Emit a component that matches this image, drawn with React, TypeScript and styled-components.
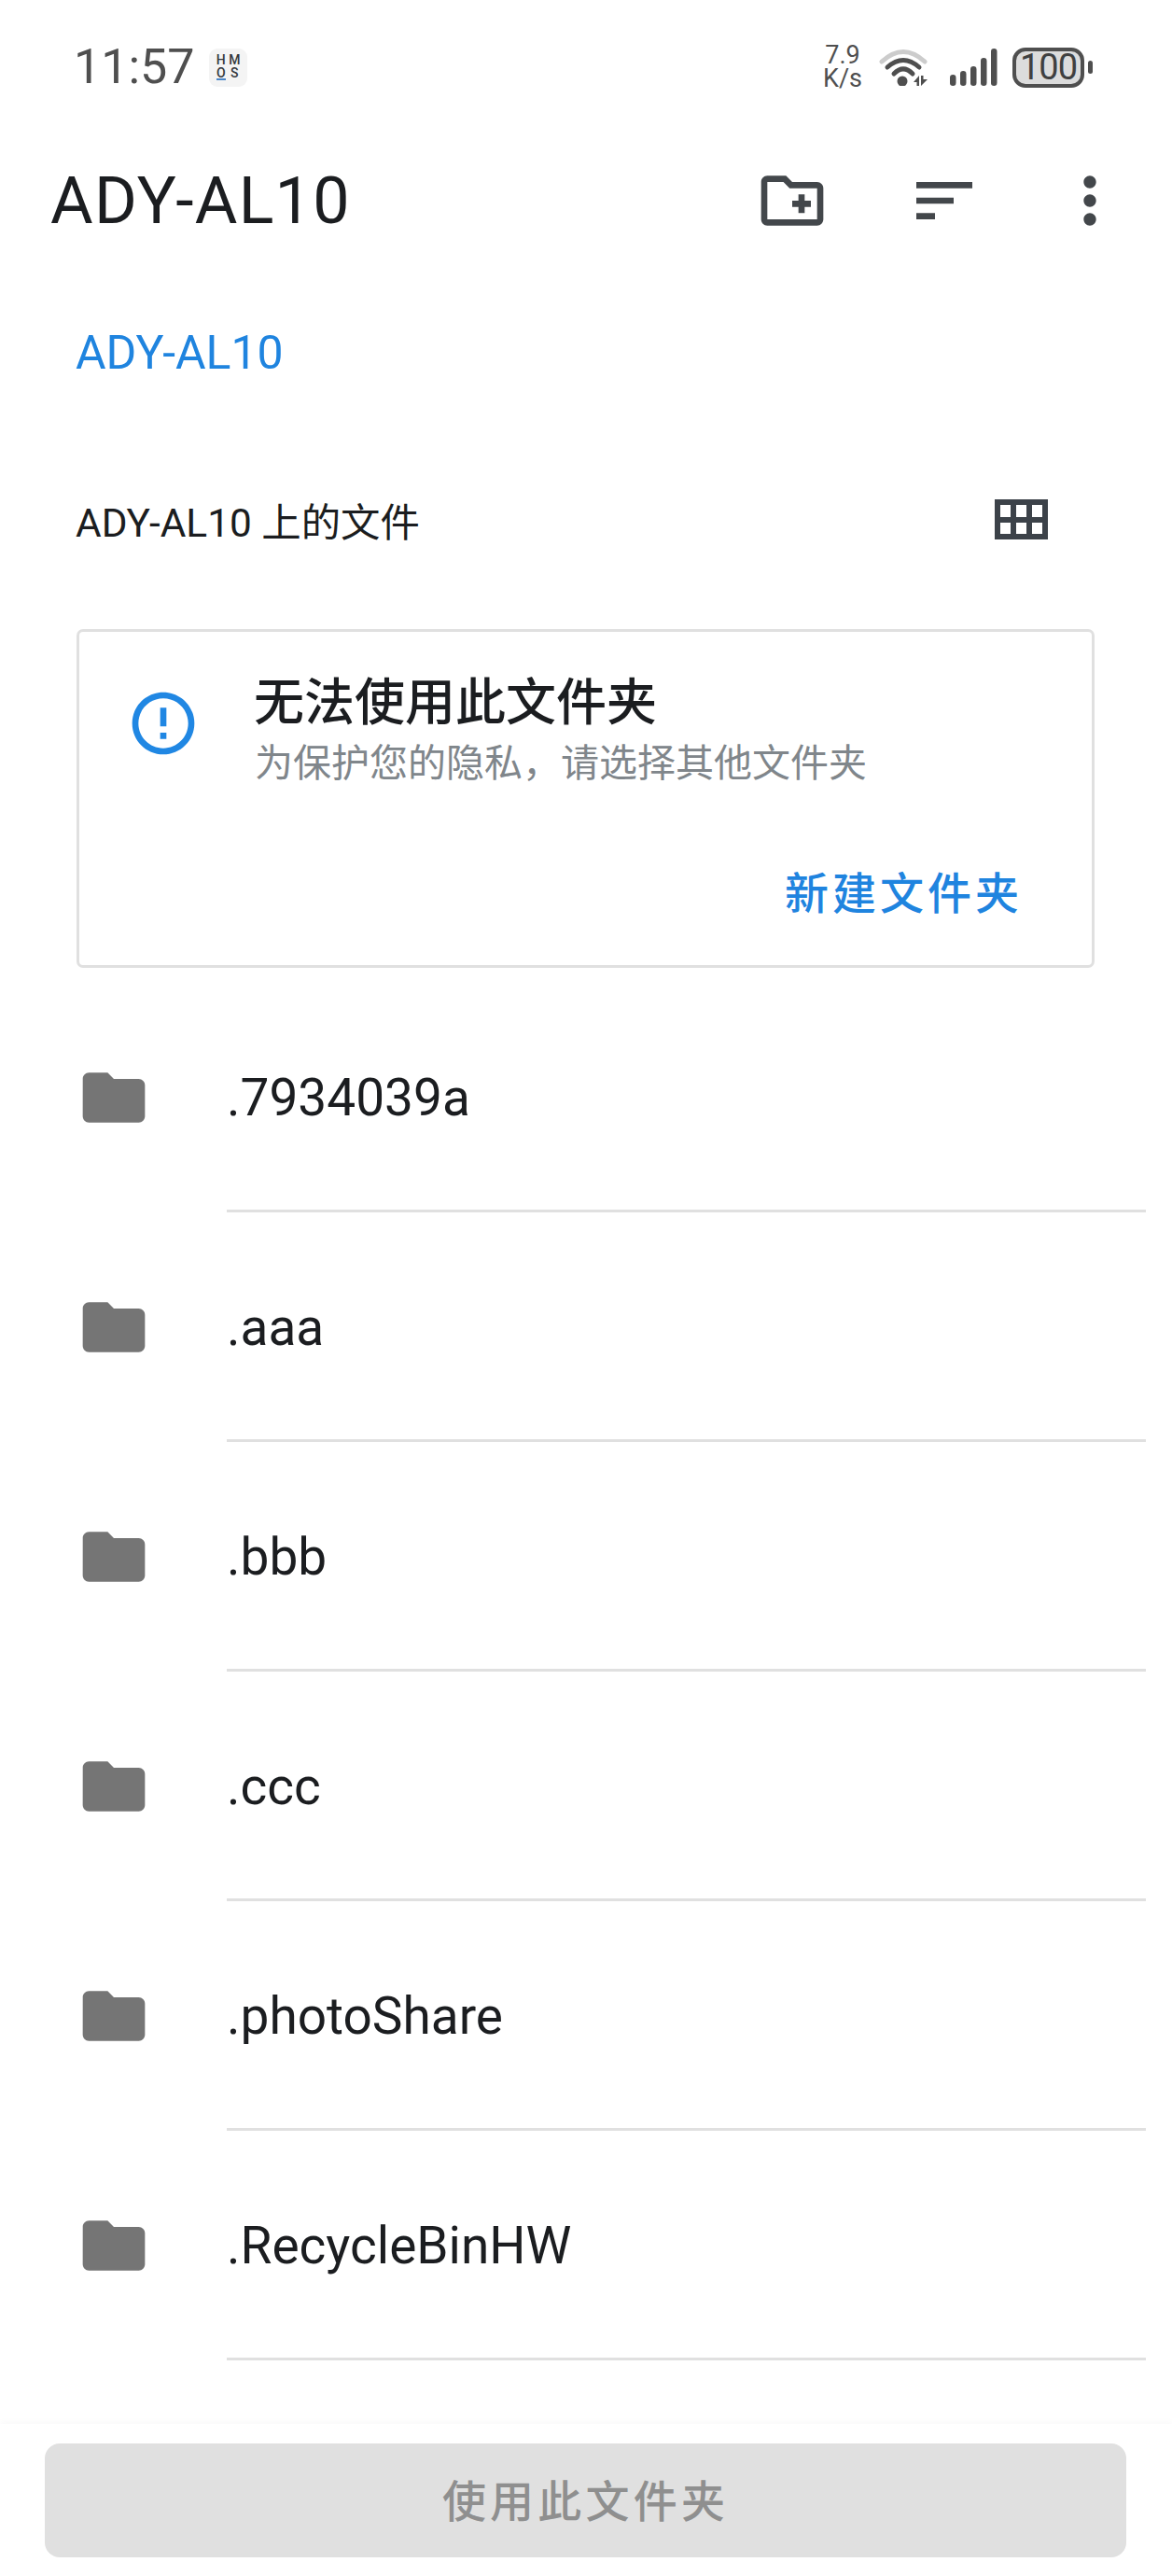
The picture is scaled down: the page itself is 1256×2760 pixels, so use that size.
import React from "react";
import styled, { createGlobalStyle } from "styled-components";

const Global = createGlobalStyle`
  html, body { margin: 0; padding: 0; background: #fff; }
  body { font-family: Roboto, "Noto Sans CJK SC", sans-serif; }
`;

const Page = styled.div`
  width: 1256px;
  height: 2760px;
  display: flex;
  flex-direction: column;
  overflow: hidden;
  background: #fff;
  color: #1b1d20;
`;

const StatusBar = styled.div`
  height: 144px;
  flex: none;
  display: flex;
  align-items: center;
  justify-content: space-between;
  padding: 0 85px 0 79px;
  color: #4f4f4f;
`;
const StatusLeft = styled.div`
  display: flex;
  align-items: center;
  gap: 15px;
`;
const Time = styled.span`
  font-size: 52px;
  line-height: 60px;
`;
const Badge = styled.div`
  width: 41px;
  height: 41px;
  border-radius: 9px;
  background: #f4f4f4;
  display: grid;
  grid-template-columns: 1fr 1fr;
  align-content: center;
  justify-items: center;
  row-gap: 1px;
  padding: 0 6px;
  box-sizing: border-box;
  font-size: 14px;
  line-height: 13px;
  font-weight: 500;
  color: #33383d;
`;
const BadgeO = styled.span`
  border-bottom: 2px solid #4a86c8;
  line-height: 12px;
`;
const StatusRight = styled.div`
  display: flex;
  align-items: center;
`;
const Speed = styled.div`
  width: 42px;
  font-size: 27px;
  line-height: 25px;
  text-align: center;
  margin-right: 18px;
`;
const Battery = styled.div`
  width: 77px;
  height: 43px;
  box-sizing: border-box;
  margin-left: 16px;
  border: 4px solid #4f4f4f;
  border-radius: 14px;
  background: #dcdcdc;
  font-size: 38px;
  line-height: 35px;
  letter-spacing: -1px;
  text-align: center;
  color: #404040;
`;
const BatteryNub = styled.div`
  width: 5px;
  height: 14px;
  margin-left: 4px;
  border-radius: 3px;
  background: #4f4f4f;
`;

const Toolbar = styled.div`
  height: 142px;
  flex: none;
  display: flex;
  align-items: center;
  padding-left: 54px;
  color: #43474b;
`;
const Title = styled.h1`
  flex: 1;
  margin: 0;
  font-size: 70px;
  line-height: 80px;
  font-weight: 400;
  letter-spacing: 1.25px;
  color: #1b1d20;
`;
const ToolIcon = styled.svg<{ $gap: number }>`
  width: 80px;
  height: 80px;
  flex: none;
  margin-right: ${(p) => p.$gap}px;
  fill: currentColor;
`;

const Breadcrumb = styled.div`
  height: 180px;
  flex: none;
  box-sizing: border-box;
  display: flex;
  align-items: center;
  padding: 3px 0 0 81px;
  font-size: 50px;
  color: #1f84df;
`;

const SectionHeader = styled.div`
  height: 180px;
  flex: none;
  display: flex;
  align-items: center;
  justify-content: space-between;
  padding: 0 133px 0 81px;
  font-size: 42.4px;
  color: #1b1d20;
`;

const Card = styled.section`
  flex: none;
  margin: 28px 83px 16px 82px;
  padding: 47px 74px 46px 50px;
  border: 3px solid #e0e0e0;
  border-radius: 7px;
`;
const CardTop = styled.div`
  display: flex;
  align-items: flex-start;
  gap: 58px;
`;
const CardIcon = styled.svg`
  width: 80px;
  height: 80px;
  flex: none;
  margin-top: 11px;
  fill: #2087e3;
`;
const CardTitle = styled.div`
  font-size: 54px;
  line-height: 60px;
  font-weight: 500;
  margin-left: -1px;
  color: #1b1d20;
`;
const CardSub = styled.div`
  margin-top: 9px;
  font-size: 41px;
  line-height: 50px;
  color: #80868b;
`;
const CardAction = styled.div`
  margin-top: 85px;
  text-align: right;
  font-size: 47px;
  line-height: 60px;
  letter-spacing: 4px;
  font-weight: 500;
  color: #1f84df;
`;

const List = styled.div`
  flex: 1;
  min-height: 0;
  overflow: hidden;
`;
const Row = styled.div`
  height: 246px;
  display: flex;
  align-items: center;
  padding-left: 82px;
`;
const FolderIcon = styled.svg`
  width: 80px;
  height: 80px;
  flex: none;
  fill: #757575;
`;
const RowLabel = styled.div`
  flex: 1;
  align-self: stretch;
  display: flex;
  align-items: center;
  margin: 0 28px 0 81px;
  padding-top: 3px;
  border-bottom: 3px solid #e0e0e0;
  font-size: 55px;
  color: #1b1d20;
`;

const BottomBar = styled.div`
  flex: none;
  height: 163px;
  box-sizing: border-box;
  padding: 21px 49px 20px 48px;
  background: #fff;
  box-shadow: 0 -3px 6px rgba(0, 0, 0, 0.025);
`;
const UseButton = styled.button`
  width: 100%;
  height: 122px;
  display: block;
  padding: 0 0 5px;
  border: 0;
  border-radius: 16px;
  background: #e0e0e0;
  color: #8f8f8f;
  font-family: inherit;
  font-size: 47px;
  font-weight: 500;
  letter-spacing: 4.2px;
`;

const folderPath =
  "M10 4H4c-1.1 0-1.99.9-1.99 2L2 18c0 1.1.9 2 2 2h16c1.1 0 2-.9 2-2V8c0-1.1-.9-2-2-2h-8l-2-2z";
const names = [".7934039a", ".aaa", ".bbb", ".ccc", ".photoShare", ".RecycleBinHW"];
const bars = [
  [0, 28, 12],
  [11, 24, 16],
  [22, 19, 21],
  [33, 10, 30],
  [44, 0, 40],
];

export default function App() {
  return (
    <Page>
      <Global />
      <StatusBar>
        <StatusLeft>
          <Time>11:57</Time>
          <Badge>
            <span>H</span>
            <span>M</span>
            <BadgeO>O</BadgeO>
            <span>S</span>
          </Badge>
        </StatusLeft>
        <StatusRight>
          <Speed>
            7.9
            <br />
            K/s
          </Speed>
          <svg width="52" height="40" viewBox="0 0 52 40" fill="none" strokeLinecap="round">
            <path d="M3 14Q26-7 49 14" stroke="#cccccc" strokeWidth="5" />
            <path d="M9 20Q26 5 43 20" stroke="#4f4f4f" strokeWidth="5" />
            <path d="M16 27Q26 17 36 27" stroke="#4f4f4f" strokeWidth="5" />
            <circle cx="25" cy="35" r="5.5" fill="#4f4f4f" />
            <path d="M37 36l6-7v11h-2.5v-4zM45 29h2.5v4H52l-7 7z" fill="#4f4f4f" />
          </svg>
          <svg width="51" height="40" viewBox="0 0 51 40" style={{ marginLeft: 24 }}>
            {bars.map(([x, y, h]) => (
              <rect key={x} x={x} y={y} width="6.5" height={h} rx="3.2" fill="#4f4f4f" />
            ))}
          </svg>
          <Battery>100</Battery>
          <BatteryNub />
        </StatusRight>
      </StatusBar>

      <Toolbar>
        <Title>ADY-AL10</Title>
        <ToolIcon $gap={83} viewBox="0 0 24 24">
          <path d="M20 6h-8l-2-2H4c-1.11 0-1.99.89-1.99 2L2 18c0 1.11.89 2 2 2h16c1.11 0 2-.89 2-2V8c0-1.11-.89-2-2-2zm0 12H4V6h5.17l2 2H20v10zm-8-4h2v2h2v-2h2v-2h-2v-2h-2v2h-2z" />
        </ToolIcon>
        <ToolIcon $gap={76} viewBox="0 0 24 24">
          <path d="M3 18h6v-2H3v2zM3 6v2h18V6H3zm0 7h12v-2H3v2z" />
        </ToolIcon>
        <ToolIcon $gap={48} viewBox="0 0 24 24">
          <path d="M12 8c1.1 0 2-.9 2-2s-.9-2-2-2-2 .9-2 2 .9 2 2 2zm0 2c-1.1 0-2 .9-2 2s.9 2 2 2 2-.9 2-2-.9-2-2-2zm0 6c-1.1 0-2 .9-2 2s.9 2 2 2 2-.9 2-2-.9-2-2-2z" />
        </ToolIcon>
      </Toolbar>

      <Breadcrumb>ADY-AL10</Breadcrumb>

      <SectionHeader>
        <span>ADY-AL10 上的文件</span>
        <svg width="57" height="43" viewBox="0 0 57 43" fill="#3c4249">
          <path
            fillRule="evenodd"
            d="M0 0h57v43H0zM6 6v13h11V6zM23 6v13h11V6zM40 6v13h11V6zM6 25v12h11V25zM23 25v12h11V25zM40 25v12h11V25z"
          />
        </svg>
      </SectionHeader>

      <Card>
        <CardTop>
          <CardIcon viewBox="0 0 24 24">
            <path d="M11 15h2v2h-2zm0-8h2v6h-2zm.99-5C6.47 2 2 6.48 2 12s4.47 10 9.99 10C17.52 22 22 17.52 22 12S17.52 2 11.99 2zM12 20c-4.42 0-8-3.58-8-8s3.58-8 8-8 8 3.58 8 8-3.58 8-8 8z" />
          </CardIcon>
          <div>
            <CardTitle>无法使用此文件夹</CardTitle>
            <CardSub>为保护您的隐私，请选择其他文件夹</CardSub>
          </div>
        </CardTop>
        <CardAction>新建文件夹</CardAction>
      </Card>

      <List>
        {names.map((name) => (
          <Row key={name}>
            <FolderIcon viewBox="0 0 24 24">
              <path d={folderPath} />
            </FolderIcon>
            <RowLabel>{name}</RowLabel>
          </Row>
        ))}
      </List>

      <BottomBar>
        <UseButton>使用此文件夹</UseButton>
      </BottomBar>
    </Page>
  );
}
